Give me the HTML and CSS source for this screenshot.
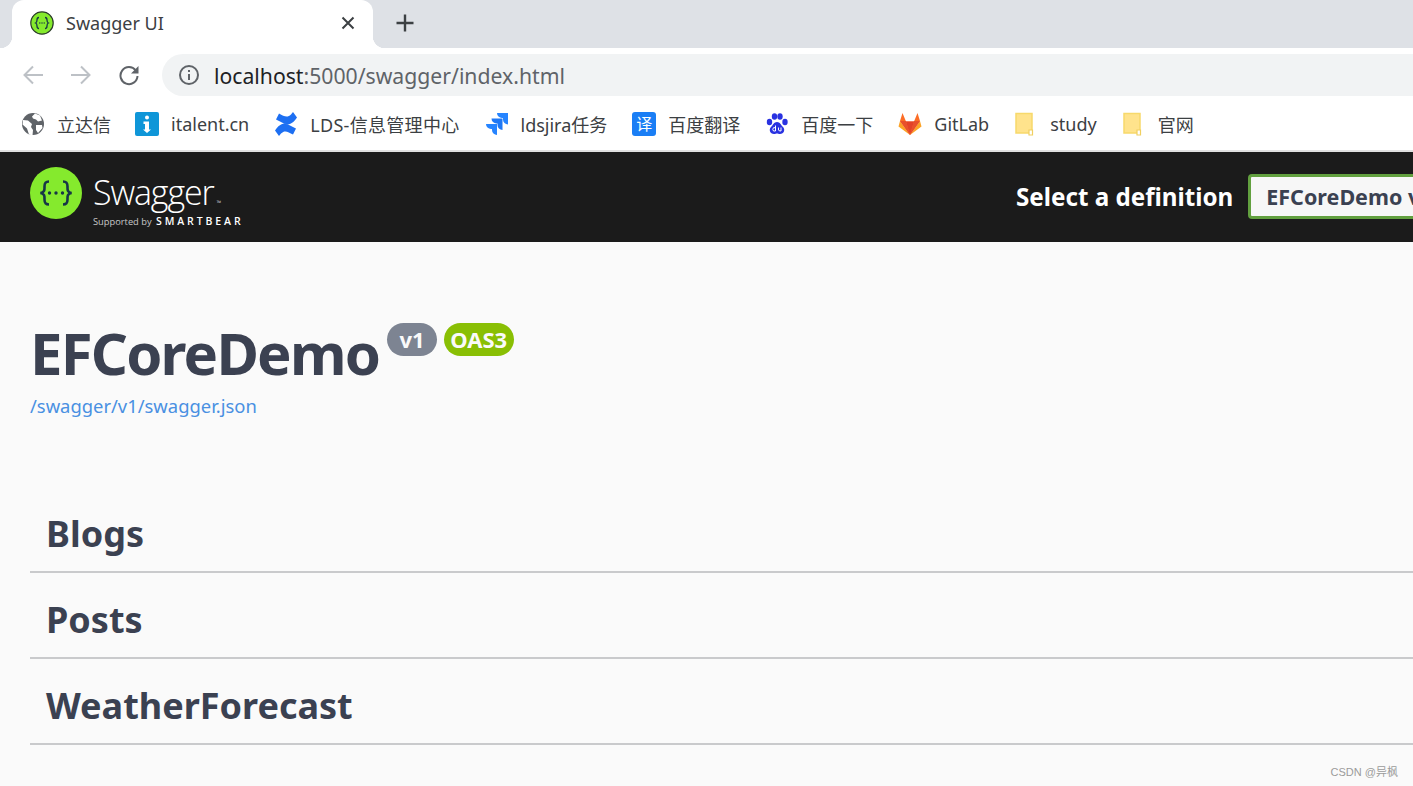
FILE: index.html
```html
<!DOCTYPE html>
<html lang="zh">
<head>
  <meta charset="UTF-8" />
  <meta name="viewport" content="width=device-width, initial-scale=1.0" />
  <title>Swagger UI</title>
  <link rel="stylesheet" href="styles.css">
</head>
<body>

  <div class="tab-strip">
    <div class="tab">
      <svg class="tab-icon" width="24" height="24" viewBox="0 0 24 24">
        <circle cx="12" cy="12" r="11.2" fill="#85ea2d" stroke="#2b3a2b" stroke-width="1.2"/>
        <path d="M9 6.5c-2 0-2 1-2 2.500s-.2 2.500-1.300 3c1.100.5 1.300 1.500 1.300 3s0 2.500 2 2.500M15 6.500c2 0 2 1 2 2.500s.2 2.500 1.300 3c-1.100.5-1.300 1.500-1.300 3s0 2.500-2 2.500" fill="none" stroke="#173647" stroke-width="1.300"/>
        <path d="M9.300 12h1M11.500 12h1M13.700 12h1" stroke="#173647" stroke-width="1.300"/>
      </svg>
      <span class="tab-title">Swagger UI</span>
      <svg class="tab-close" width="14" height="14" viewBox="0 0 14 14">
        <path d="M1.500 1.500l11 11M12.500 1.500l-11 11" stroke="#3c4043" stroke-width="2"/>
      </svg>
    </div>
    <svg class="new-tab" width="20" height="20" viewBox="0 0 20 20">
      <path d="M10 1.500v17M1.500 10h17" stroke="#3c4043" stroke-width="2.400"/>
    </svg>
  </div>

  <div class="toolbar">
    <svg class="nav-icon" width="22" height="22" viewBox="0 0 22 22">
      <path d="M21 11H2.500M11 2.500L2.500 11l8.500 8.500" fill="none" stroke="#bdc1c6" stroke-width="2"/>
    </svg>
    <svg class="nav-icon" width="22" height="22" viewBox="0 0 22 22">
      <path d="M1 11h18.500M11 2.500l8.500 8.500-8.500 8.500" fill="none" stroke="#bdc1c6" stroke-width="2"/>
    </svg>
    <svg class="nav-icon" width="22" height="22" viewBox="0 0 22 22">
      <path d="M17.800 6.500A8.500 8.500 0 1 0 19.500 12" fill="none" stroke="#5f6368" stroke-width="2"/>
      <path d="M20.500 2v7.500H13z" fill="#5f6368"/>
    </svg>
    <div class="omnibox">
      <svg width="22" height="22" viewBox="0 0 22 22">
        <circle cx="11" cy="11" r="9" fill="none" stroke="#5f6368" stroke-width="2"/>
        <path d="M11 10v6M11 6v2" stroke="#5f6368" stroke-width="2"/>
      </svg>
      <span class="url"><span class="url-host">localhost</span>:5000/swagger/index.html</span>
    </div>
  </div>

  <div class="bookmarks">
    <a class="bookmark bm-first">
      <svg width="24" height="24" viewBox="0 0 24 24">
        <circle cx="12" cy="12" r="11" fill="#5f6368"/>
        <path d="M2 8l5 .5 4 3.500-1 3 2 3-.5 5.500-3.500-1-2-6-4.500-4zM14 1.500l5 2 2 5-4 1-2-2-3-1-1-2zM15 13l6 0 .5 3-4.500 5-2-3z" fill="#fff"/>
      </svg>
      <span>立达信</span>
    </a>
    <a class="bookmark">
      <svg width="24" height="24" viewBox="0 0 24 24">
        <rect width="24" height="24" rx="2" fill="#0f96d8"/>
        <path d="M12 3.500a2 2 0 1 1 0 4 2 2 0 0 1 0-4zM8.500 9.500h5.500v8h2l-4 3.500-4-3.500h2v-5.500h-1.500z" fill="#fff"/>
      </svg>
      <span>italent.cn</span>
    </a>
    <a class="bookmark bm-wide">
      <svg width="24" height="24" viewBox="0 0 24 24">
        <path d="M1 18.500c6-9 11-7 15-5l6 3-3 6c-5-2.500-8-5-12-1l-2 2.500zM23 5.500c-6 9-11 7-15 5l-6-3 3-6c5 2.500 8 5 12 1l2-2.500z" fill="#1d6ff2"/>
      </svg>
      <span>LDS-信息管理中心</span>
    </a>
    <a class="bookmark">
      <svg width="24" height="24" viewBox="0 0 24 24">
        <path d="M12 1h11v11.500a5 5 0 0 1-5-5V6h-1a5 5 0 0 1-5-5z" fill="#2684ff"/>
        <path d="M6.500 6.500h11V18a5 5 0 0 1-5-5v-1.500h-1a5 5 0 0 1-5-5z" fill="#1f78f5"/>
        <path d="M1 12h11v11a5 5 0 0 1-5-5v-1H6a5 5 0 0 1-5-5z" fill="#2684ff"/>
      </svg>
      <span>ldsjira任务</span>
    </a>
    <a class="bookmark">
      <span class="translate-icon">译</span>
      <span>百度翻译</span>
    </a>
    <a class="bookmark">
      <svg width="24" height="24" viewBox="0 0 24 24">
        <ellipse cx="4.500" cy="10" rx="2.700" ry="3.200" fill="#2932e1"/>
        <ellipse cx="9.500" cy="4.500" rx="2.700" ry="3.300" fill="#2932e1"/>
        <ellipse cx="15" cy="4.500" rx="2.700" ry="3.300" fill="#2932e1"/>
        <ellipse cx="20" cy="10" rx="2.700" ry="3.200" fill="#2932e1"/>
        <path d="M12 10c3 0 4 3 6 5 2.500 2.500 1 7-3 7-1.500 0-2-.5-3-.5s-1.500.5-3 .5c-4 0-5.500-4.500-3-7 2-2 3-5 6-5z" fill="#2932e1"/>
        <path d="M10.500 13.500v5.500H8.500q-1.500-1.700 0-3.300h2M13.500 15.500v2.500q0 1 2.500 1v-3.500" fill="none" stroke="#fff" stroke-width="1"/>
      </svg>
      <span>百度一下</span>
    </a>
    <a class="bookmark">
      <svg width="24" height="24" viewBox="0 0 24 24">
        <path d="M12 23L.5 14.500 2 9z" fill="#fca326"/>
        <path d="M12 23l11.500-8.500L22 9z" fill="#fca326"/>
        <path d="M12 23L2 9l2.500-8L8 9.500h8L19.500 1 22 9z" fill="#fc6d26"/>
        <path d="M12 23L8 9.500h8z" fill="#e24329"/>
        <path d="M2 9h6l4 14zM22 9h-6l-4 14z" fill="#e8512c"/>
      </svg>
      <span>GitLab</span>
    </a>
    <a class="bookmark">
      <svg width="24" height="24" viewBox="0 0 24 24">
        <path d="M2 1.500h16v19.500h-16z" fill="#ffe38c" stroke="#f7d96b" stroke-width="1.500"/>
        <path d="M15 23v-5h3.500v5z" fill="#fff" stroke="#f0cf60" stroke-width="1.200"/>
      </svg>
      <span>study</span>
    </a>
    <a class="bookmark">
      <svg width="24" height="24" viewBox="0 0 24 24">
        <path d="M2 1.500h16v19.500h-16z" fill="#ffe38c" stroke="#f7d96b" stroke-width="1.500"/>
        <path d="M15 23v-5h3.500v5z" fill="#fff" stroke="#f0cf60" stroke-width="1.200"/>
      </svg>
      <span>官网</span>
    </a>
  </div>

  <div class="topbar">
    <div class="logo">
      <svg width="52" height="52" viewBox="0 0 52 52">
        <circle cx="26" cy="26" r="26" fill="#85ea2d"/>
        <path d="M19 14.500c-4 0-4.500 2-4.500 5s.5 5.500-4 6.500c4.500 1 4 3.500 4 6.500s.5 5 4.500 5M33 14.500c4 0 4.500 2 4.500 5s-.5 5.500 4 6.500c-4.500 1-4 3.500-4 6.500s-.5 5-4.500 5" fill="none" stroke="#173647" stroke-width="2.600"/>
        <circle cx="19.500" cy="26" r="1.700" fill="#173647"/>
        <circle cx="26" cy="26" r="1.700" fill="#173647"/>
        <circle cx="32.500" cy="26" r="1.700" fill="#173647"/>
      </svg>
      <div class="logo-text">
        <div class="logo-name">Swagger<span class="logo-tm">™</span></div>
        <div class="logo-sub">Supported by <span class="logo-bear">SMARTBEAR</span></div>
      </div>
    </div>
    <div class="definition">
      <label class="definition-label">Select a definition</label>
      <div class="definition-select">EFCoreDemo v1</div>
    </div>
  </div>

  <div class="content">
    <div class="info">
      <h1 class="title">EFCoreDemo
        <span class="badge badge-version">v1</span>
        <span class="badge badge-oas">OAS3</span>
      </h1>
      <a class="spec-link">/swagger/v1/swagger.json</a>
    </div>
    <div class="tag-section"><h3>Blogs</h3></div>
    <div class="tag-section"><h3>Posts</h3></div>
    <div class="tag-section"><h3>WeatherForecast</h3></div>
  </div>

  <div class="watermark">CSDN @异枫</div>

</body>
</html>
```

FILE: styles.css
```css
html, body {
  height: 100%;
}
body {
  font-family: 'Noto Sans', 'Noto Sans CJK SC', sans-serif;
  background-color: #fafafa;
  margin: 0;
  padding: 0;
  width: 1413px;
  height: 786px;
  overflow: hidden;
  position: relative;
}
.tab-strip {
  height: 48px;
  background-color: #dee1e6;
  display: flex;
  align-items: center;
  padding-left: 12px;
}
.tab {
  width: 361px;
  height: 48px;
  box-sizing: border-box;
  background: white;
  border-radius: 12px 12px 0 0;
  display: flex;
  align-items: center;
  padding: 0 18px 2px;
  position: relative;
}
.tab::before, .tab::after {
  content: "";
  position: absolute;
  bottom: 0;
  width: 12px;
  height: 12px;
  background: white;
}
.tab::before {
  left: -12px;
  background: radial-gradient(circle at 0 0, #dee1e6 12px, white 12.5px);
}
.tab::after {
  right: -12px;
  background: radial-gradient(circle at 100% 0, #dee1e6 12px, white 12.5px);
}
.tab-title {
  margin-left: 12px;
  font-size: 18px;
  color: #3c4043;
  flex: 1;
}
.new-tab {
  margin-left: 22px;
  margin-bottom: 2px;
}
.toolbar {
  height: 54px;
  box-sizing: border-box;
  padding-left: 22px;
  background: white;
  display: flex;
  align-items: center;
}
.nav-icon {
  margin-right: 26px;
  flex-shrink: 0;
}
.nav-icon:nth-child(3) {
  margin-right: 22px;
}
.omnibox {
  flex: 1;
  height: 42px;
  margin-right: -40px;
  background: #f1f3f4;
  border-radius: 21px;
  display: flex;
  align-items: center;
  padding-left: 16px;
}
.url {
  margin-left: 14px;
  font-size: 21.2px;
  color: #5f6368;
}
.url-host {
  color: #202124;
}
.bookmarks {
  height: 50px;
  box-sizing: border-box;
  background: white;
  border-bottom: 2px solid #e0e0e0;
  display: flex;
  align-items: center;
  padding: 0 0 4px 21px;
  gap: 25px;
}
.bookmark {
  display: flex;
  align-items: center;
  gap: 12px;
  font-size: 18px;
  color: #3c4043;
  white-space: nowrap;
}
.bm-first {
  margin-right: -1px;
}
.bm-wide span {
  letter-spacing: 0.3px;
}
.translate-icon {
  width: 24px;
  height: 24px;
  border-radius: 3px;
  background: #1a7ef5;
  color: white;
  font-size: 16px;
  line-height: 24px;
  text-align: center;
}
.topbar {
  height: 90px;
  background-color: #1b1b1b;
  display: flex;
  align-items: center;
  justify-content: space-between;
  padding-left: 30px;
}
.logo {
  display: flex;
  align-items: flex-start;
  gap: 11px;
  align-self: flex-start;
  margin-top: 15px;
}
.logo-text {
  color: white;
  padding-top: 7px;
}
.logo-name {
  font-family: 'Open Sans', sans-serif;
  font-weight: 300;
  font-size: 34px;
  line-height: 36px;
  letter-spacing: -1.100px;
}
.logo-tm {
  font-size: 6px;
  letter-spacing: 0;
  margin-left: 3px;
}
.logo-sub {
  font-family: 'Open Sans', sans-serif;
  font-size: 9.300px;
  line-height: 14px;
  margin-top: -7px;
  color: #c8c8c8;
}
.logo-bear {
  font-size: 10.500px;
  font-weight: 600;
  letter-spacing: 2.900px;
  color: white;
  margin-left: 2px;
}
.definition {
  display: flex;
  align-items: center;
  gap: 15px;
  width: 397px;
  flex-shrink: 0;
  overflow: hidden;
  padding-bottom: 1px;
}
.definition-label {
  font-size: 24.2px;
  font-weight: 700;
  color: white;
  white-space: nowrap;
}
.definition-select {
  flex-shrink: 0;
  width: 300px;
  height: 45px;
  box-sizing: border-box;
  border: 3px solid #62a03f;
  border-radius: 4px;
  background: #f7f7f7;
  padding-left: 15px;
  font-size: 21.5px;
  font-weight: 700;
  line-height: 39px;
  color: #3b4151;
}
.content {
  padding: 0 0 0 30px;
}
.info {
  margin-top: 75px;
  height: 170px;
}
.title {
  margin: 0;
  font-size: 58px;
  font-weight: 700;
  line-height: 72px;
  letter-spacing: -1.800px;
  color: #3b4151;
  white-space: nowrap;
}
.badge {
  display: inline-block;
  vertical-align: top;
  margin-top: 6px;
  height: 33px;
  border-radius: 17px;
  font-size: 22px;
  line-height: 33px;
  letter-spacing: 0;
  color: #fafafa;
  padding: 0 6px;
}
.badge-version {
  background: #7d8492;
  padding: 0 12px;
  margin-left: -5px;
}
.badge-oas {
  background: #89bf04;
  margin-left: -6px;
  padding: 0 6.500px;
}
.spec-link {
  display: block;
  margin-top: 4px;
  font-size: 18.4px;
  line-height: 26px;
  color: #4990e2;
}
.tag-section {
  height: 86px;
  box-sizing: border-box;
  border-bottom: 2px solid #c9cacc;
}
.tag-section h3 {
  margin: 0;
  padding-left: 16px;
  padding-top: 22px;
  font-size: 36px;
  line-height: 50px;
  font-weight: 700;
  color: #3b4151;
}
.watermark {
  position: absolute;
  right: 15px;
  bottom: 7px;
  font-family: 'Liberation Sans', 'Noto Sans CJK SC', sans-serif;
  font-size: 11px;
  color: #9a9a9a;
}
```
